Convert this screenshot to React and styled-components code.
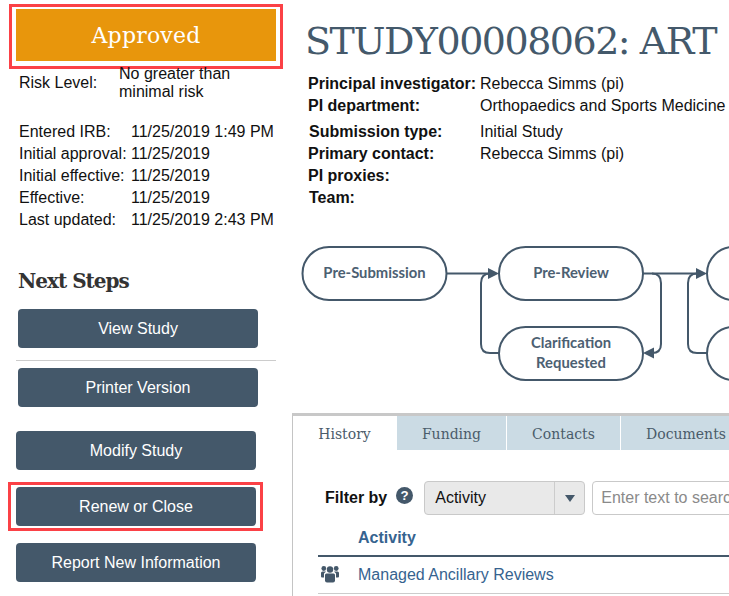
import React from "react";
import styled, { createGlobalStyle } from "styled-components";

const Global = createGlobalStyle`
  html, body { margin: 0; padding: 0; background: #fff; }
  body { font-family: "Liberation Sans", Arial, sans-serif; font-size: 16px; color: #111; }
`;
const SLAB = `"DejaVu Serif", "Liberation Serif", serif`;

const Page = styled.div`
  width: 729px; height: 596px; overflow: hidden;
  display: grid; grid-template-columns: 292px 437px;
`;
const Left = styled.aside`
  display: flex; flex-direction: column; padding: 4px 0 0 8px; box-sizing: border-box;
`;
const Highlight = styled.div`
  border: 3px solid #fb4146; box-sizing: border-box; padding: ${p => p.$pad};
  margin-left: ${p => p.$ml || 0}px; margin-top: ${p => p.$mt || 0}px; width: ${p => p.$w}px;
`;
const Status = styled.div`
  background: #e8960c; color: #fff; height: 52px; box-sizing: border-box; padding-top: 2px;
  display: flex; align-items: center; justify-content: center;
  font: 22px/1 ${SLAB}; letter-spacing: 0.2px;
`;
const Risk = styled.div`
  display: grid; grid-template-columns: 100px 160px; margin: -4px 0 0 11px; line-height: 17.5px; align-items: center;
`;
const Dates = styled.div`
  display: grid; grid-template-columns: 112px 160px; margin: 21px 0 0 11px; line-height: 22px;
  white-space: nowrap;
`;
const NextTitle = styled.h2`
  font: bold 20px/24px ${SLAB}; color: #333; margin: 38px 0 16px 10px; letter-spacing: -1px; white-space: nowrap;
`;
const Action = styled.div`
  width: 240px; height: 39px; background: #44586a; color: #fff; border-radius: 4px;
  display: flex; align-items: center; justify-content: center; font-size: 16px;
  margin-left: ${p => p.$ml ?? 8}px; margin-top: ${p => p.$mt || 0}px;
`;
const Divider = styled.hr`
  border: 0; height: 1px; background: #ccc; width: 260px; margin: 12px 0 7px 8px;
`;
const Right = styled.main`
  display: flex; flex-direction: column; min-width: 0;
`;
const Title = styled.h1`
  font: 38px/46px ${SLAB}; color: #44596b; margin: 18px 0 0 13px; white-space: nowrap; font-weight: 400; letter-spacing: -1.5px;
`;
const Meta = styled.div`
  display: grid; grid-template-columns: 172px 300px; margin: 9px 0 0 16px; line-height: 22px; white-space: nowrap;
  & + & { margin-top: 4px; }
`;
const Key = styled.b`
  font-weight: 700; margin-left: ${p => p.$ml || 0}px;
`;
const Flow = styled.svg`
  display: block; margin: 36px 0 0 8px; flex: none;
`;
const Panel = styled.section`
  margin-top: 28px; border-top: 3px solid #c8c8c8; border-left: 1px solid #c4c4c4; width: 500px; flex: 1;
`;
const Tabs = styled.div`
  display: flex; height: 34px; gap: 1px;
`;
const Tab = styled.div`
  width: ${p => p.$w}px; flex: none; display: flex; align-items: center; justify-content: center;
  box-sizing: border-box; padding-top: 1px;
  font: 14px ${SLAB}; color: #4a5b6a; background: ${p => p.$active ? "#fff" : "#cbdbe4"};
`;
const Filter = styled.div`
  display: flex; align-items: center; margin: 31px 0 0 32px; height: 34px;
`;
const FilterLabel = styled.b`
  font-size: 16px; margin-right: 9px; color: #111; white-space: nowrap;
`;
const Help = styled.svg`
  margin: -6px 11px 0 0; flex: none;
`;
const Select = styled.div`
  width: 161px; height: 34px; flex: none; box-sizing: border-box; background: #e9e9e9; border: 1px solid #c9c9c9; border-radius: 4px;
  display: flex; align-items: center; font-size: 16px; color: #111;
`;
const SelectText = styled.span`
  flex: 1; padding-left: 10px;
`;
const Caret = styled.span`
  width: 29px; height: 100%; border-left: 1px solid #ccc; display: flex; align-items: center; justify-content: center;
  &::after { content: ""; border: 5.5px solid transparent; border-top: 7px solid #44586a; border-bottom: 0; }
`;
const Search = styled.div`
  width: 220px; height: 34px; flex: none; box-sizing: border-box; margin-left: 7px; border: 1px solid #c9c9c9; border-radius: 4px;
  display: flex; align-items: center; padding-left: 8px; color: #8a8a8a; font-size: 16px; white-space: nowrap; overflow: hidden;
`;
const Head = styled.div`
  margin: 9px 0 0 25px; height: 31px; border-bottom: 2px solid #44586a; font-weight: 700; color: #36638f;
  padding-left: 40px; line-height: 28px;
`;
const Row = styled.div`
  margin-left: 25px; height: 36px; border-bottom: 1px solid #ccc; display: flex; align-items: center; color: #36638f;
`;
const RowIcon = styled.svg`
  width: 18px; margin: -2px 19px 0 3px; flex: none;
`;

const Node = ({ x, y, lines }) => (
  <g>
    <rect x={x} y={y} width="144" height="53" rx="26.5" fill="#fff" stroke="#44586a" strokeWidth="2" />
    {lines.map((l, i) => (
      <text key={l} x={x + 72} y={y + 31 + (i - (lines.length - 1) / 2) * 20 - 0.5} textAnchor="middle"
        fontFamily="Lato, sans-serif" fontWeight="700" fontSize="14.8" fill="#4c6072">{l}</text>
    ))}
  </g>
);

export default function App() {
  return (
    <Page>
      <Global />
      <Left>
        <Highlight $w={274} $ml={1} $pad="2px 4px 5px">
          <Status>Approved</Status>
        </Highlight>
        <Risk><span>Risk Level:</span><span>No greater than minimal risk</span></Risk>
        <Dates>
          <span>Entered IRB:</span><span>11/25/2019 1:49 PM</span>
          <span>Initial approval:</span><span>11/25/2019</span>
          <span>Initial effective:</span><span>11/25/2019</span>
          <span>Effective:</span><span>11/25/2019</span>
          <span>Last updated:</span><span>11/25/2019 2:43 PM</span>
        </Dates>
        <NextTitle>Next Steps</NextTitle>
        <Action $ml={10}>View Study</Action>
        <Divider />
        <Action $ml={10}>Printer Version</Action>
        <Action $mt={24} $ml={8}>Modify Study</Action>
        <Highlight $w={255} $mt={12} $pad="2px 4px 2px 5px">
          <Action $ml={0}>Renew or Close</Action>
        </Highlight>
        <Action $mt={12} $ml={8}>Report New Information</Action>
      </Left>
      <Right>
        <Title>STUDY00008062: ART</Title>
        <Meta>
          <Key>Principal investigator:</Key><span>Rebecca Simms (pi)</span>
          <Key>PI department:</Key><span>Orthopaedics and Sports Medicine</span>
        </Meta>
        <Meta>
          <Key $ml={1}>Submission type:</Key><span>Initial Study</span>
          <Key>Primary contact:</Key><span>Rebecca Simms (pi)</span>
          <Key>PI proxies:</Key><span />
          <Key $ml={1}>Team:</Key><span />
        </Meta>
        <Flow width="429" height="140" viewBox="300 245 429 140">
          <g fill="none" stroke="#44586a" strokeWidth="2">
            <path d="M447 273.5H490" />
            <path d="M499 353H490Q481 353 481 344V283Q481 273.5 490 273.5" />
            <path d="M643 273.5H698" />
            <path d="M652 273.5Q661 273.5 661 283V344Q661 353 652 353" />
            <path d="M707 353H697Q688 353 688 344V283Q688 273.5 697 273.5" />
          </g>
          <g fill="#44586a">
            <path d="M499 273.5L488 268V279Z" />
            <path d="M707 273.5L696 268V279Z" />
            <path d="M643 353L654 347.5V358.5Z" />
          </g>
          <Node x={302.5} y={247} lines={["Pre-Submission"]} />
          <Node x={499} y={247} lines={["Pre-Review"]} />
          <Node x={499} y={327} lines={["Clarification", "Requested"]} />
          <Node x={707} y={247} lines={[""]} />
          <Node x={707} y={327} lines={[""]} />
        </Flow>
        <Panel>
          <Tabs>
            <Tab $active $w={103}>History</Tab>
            <Tab $w={109}>Funding</Tab>
            <Tab $w={113}>Contacts</Tab>
            <Tab $w={130}>Documents</Tab>
          </Tabs>
          <Filter>
            <FilterLabel>Filter by</FilterLabel>
            <Help width="17" height="17" viewBox="0 0 18 18">
              <circle cx="9" cy="9" r="9" fill="#44586a" />
              <text x="9" y="14" textAnchor="middle" fontFamily="'Liberation Sans', sans-serif" fontWeight="700" fontSize="14" fill="#fff">?</text>
            </Help>
            <Select><SelectText>Activity</SelectText><Caret /></Select>
            <Search>Enter text to search</Search>
          </Filter>
          <Head>Activity</Head>
          <Row>
            <RowIcon height="18" viewBox="0 0 18 18" fill="#44586a">
              <circle cx="9" cy="4.5" r="3.2" />
              <circle cx="2.8" cy="3.5" r="2.4" />
              <circle cx="15.2" cy="3.5" r="2.4" />
              <path d="M4 10Q4 8.5 5.5 8.5H12.5Q14 8.5 14 10V15.5Q14 17.5 12 17.5H6Q4 17.5 4 15.5Z" />
              <path d="M0 8Q0 6.5 1.5 6.5H5L3 8.5V12.5H1Q0 12.5 0 11.5Z" />
              <path d="M18 8Q18 6.5 16.5 6.5H13L15 8.5V12.5H17Q18 12.5 18 11.5Z" />
            </RowIcon>
            Managed Ancillary Reviews
          </Row>
        </Panel>
      </Right>
    </Page>
  );
}
